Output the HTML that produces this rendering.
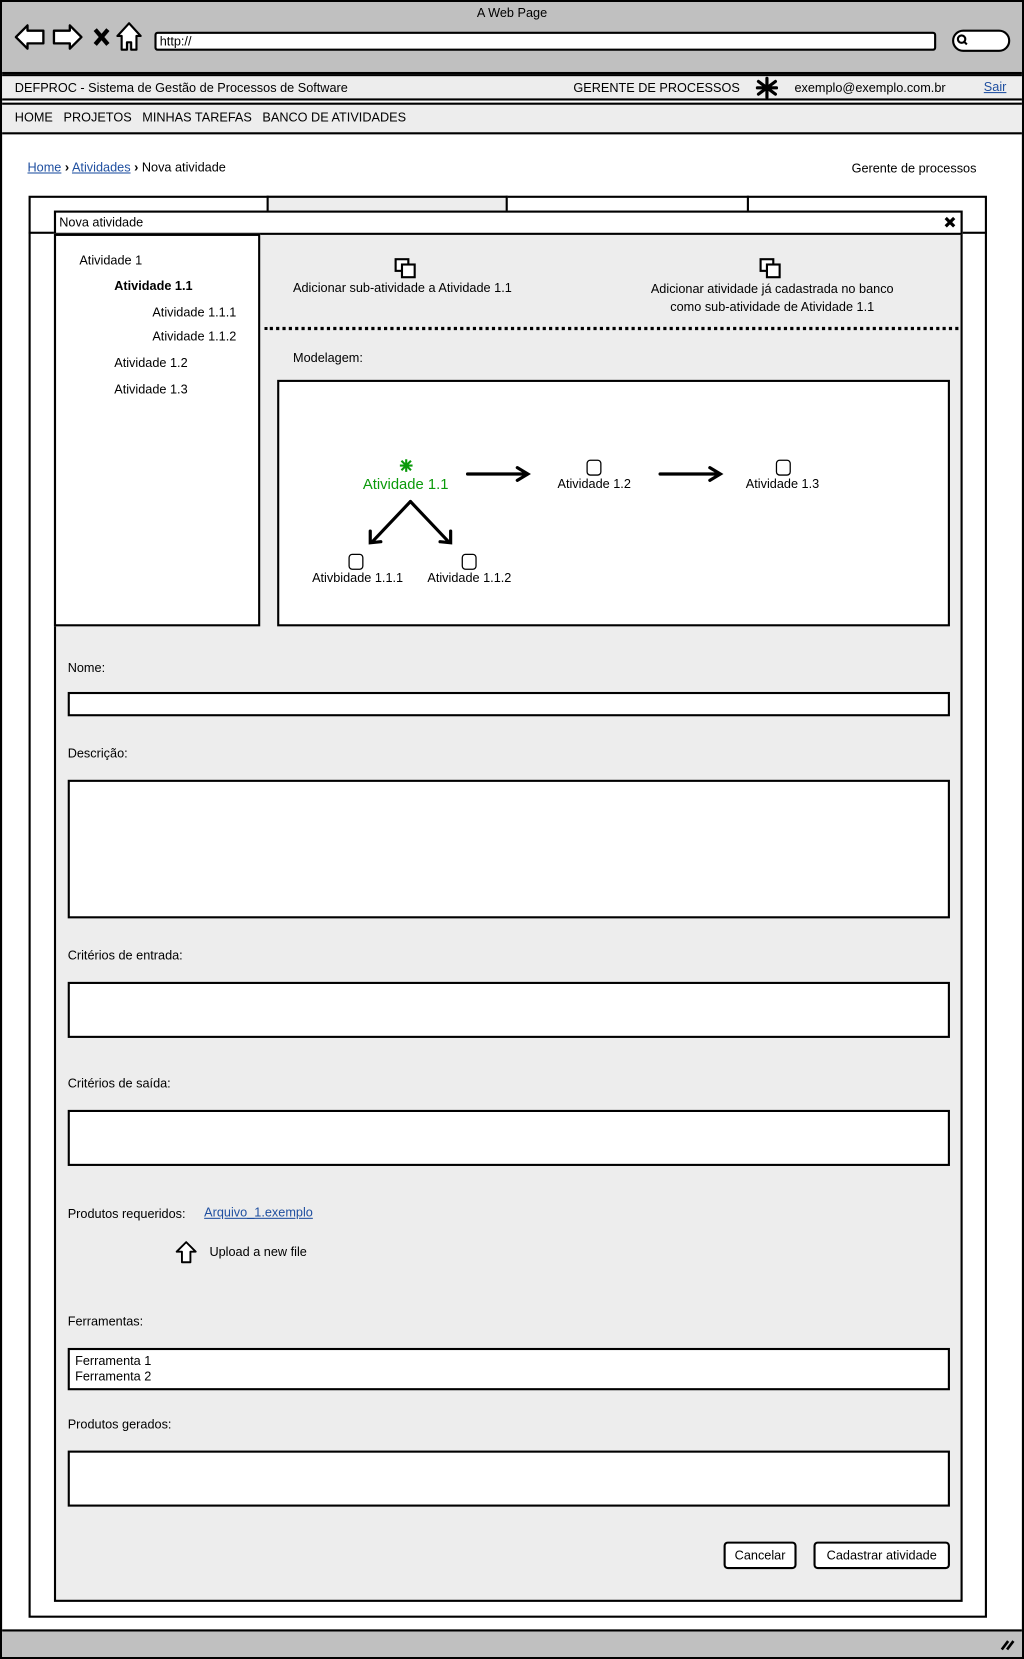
<!DOCTYPE html>
<html><head><meta charset="utf-8"><style>
html,body{margin:0;padding:0;width:1024px;height:1659px;overflow:hidden;background:#fff}
#w{position:absolute;left:0;top:0;width:968px;height:1568px;transform:scale(1.05785,1.05804);transform-origin:0 0;font-family:"Liberation Sans",sans-serif;font-size:12px;color:#000}
.a{position:absolute}
.t{position:absolute;white-space:nowrap;line-height:14px}
.box{position:absolute;background:#fff;border:2px solid #000;box-sizing:border-box}
a{color:#1f4fa0;text-decoration:underline}
</style></head><body><div id="w">
<div class="a" style="left:0;top:0;width:968px;height:1568px;border:2px solid #000;box-sizing:border-box"></div>
<div class="a" style="left:2px;top:2px;width:964px;height:66px;background:#c0c0c0;border-bottom:2px solid #000"></div>
<div class="t" style="left:0;width:968px;text-align:center;top:5px;font-size:12px">A Web Page</div>
<svg class="a" style="left:12px;top:19px" width="130" height="32" viewBox="0 0 130 32">
<path d="M3 16 L14 5 L14 10 L29 10 L29 22 L14 22 L14 27 Z" fill="#fff" stroke="#000" stroke-width="2.2" stroke-linejoin="round"/>
<path d="M65 16 L54 5 L54 10 L39 10 L39 22 L54 22 L54 27 Z" fill="#fff" stroke="#000" stroke-width="2.2" stroke-linejoin="round"/>
<path d="M78 9 L90 23 M90 9 L78 23" stroke="#000" stroke-width="4"/>
<path d="M110 3 L99 15 L103 15 L103 28 L108 28 L108 21 L112 21 L112 28 L117 28 L117 15 L121 15 Z" fill="#fff" stroke="#000" stroke-width="2" stroke-linejoin="round"/>
</svg>
<div class="a" style="left:146px;top:30px;width:739px;height:18px;background:#fff;border:2px solid #000;box-sizing:border-box;border-radius:3px"></div>
<div class="t" style="left:151px;top:32px">http://</div>
<div class="a" style="left:900px;top:28px;width:55px;height:21px;background:#fff;border:2px solid #000;box-sizing:border-box;border-radius:11px"></div>
<svg class="a" style="left:903px;top:31px" width="14" height="14"><circle cx="6" cy="6" r="3.5" fill="none" stroke="#000" stroke-width="2"/><path d="M8 8 L11 11" stroke="#000" stroke-width="2"/></svg>
<div class="a" style="left:2px;top:70px;width:964px;height:25px;background:#ededed;border-top:2px solid #000;border-bottom:2px solid #000;box-sizing:border-box"></div>
<div class="t" style="left:14px;top:76px">DEFPROC - Sistema de Gestão de Processos de Software</div>
<div class="t" style="left:542px;top:76px">GERENTE DE PROCESSOS</div>
<svg class="a" style="left:714px;top:72px" width="22" height="22"><g stroke="#000" stroke-width="3" stroke-linecap="round"><path d="M11 2 L11 20 M3 5 L19 17 M19 5 L3 17 M2 11 L20 11"/></g></svg>
<div class="t" style="left:751px;top:76px">exemplo@exemplo.com.br</div>
<div class="t" style="left:930px;top:75px"><a>Sair</a></div>
<div class="a" style="left:2px;top:97px;width:964px;height:30px;background:#ededed;border-top:2px solid #000;border-bottom:2px solid #000;box-sizing:border-box"></div>
<div class="t" style="left:14px;top:104px">HOME&nbsp;&nbsp;&nbsp;PROJETOS&nbsp;&nbsp;&nbsp;MINHAS TAREFAS&nbsp;&nbsp;&nbsp;BANCO DE ATIVIDADES</div>
<div class="t" style="left:26px;top:151px"><a>Home</a> <b>›</b> <a>Atividades</a> <b>›</b> Nova atividade</div>
<div class="t" style="left:805px;top:152px">Gerente de processos</div>
<div class="a" style="left:27px;top:185px;width:906px;height:1344px;border:2px solid #000;box-sizing:border-box"></div>
<div class="a" style="left:252px;top:185px;width:228px;height:15px;background:#ededed;border-left:2px solid #000;border-right:2px solid #000;border-top:2px solid #000;box-sizing:border-box"></div>
<div class="a" style="left:706px;top:185px;width:2px;height:15px;background:#000"></div>
<div class="a" style="left:27px;top:219px;width:906px;height:2px;background:#000"></div>
<div class="a" style="left:51px;top:199px;width:859px;height:1315px;background:#ededed;border:2px solid #000;box-sizing:border-box"></div>
<div class="a" style="left:51px;top:199px;width:859px;height:23px;background:#fff;border:2px solid #000;box-sizing:border-box"></div>
<div class="t" style="left:56px;top:203px">Nova atividade</div>
<svg class="a" style="left:892px;top:204px" width="12" height="12"><path d="M2 2 L10 10 M10 2 L2 10" stroke="#000" stroke-width="3"/></svg>
<div class="box" style="left:51px;top:221px;width:195px;height:371px"></div>
<div class="t" style="left:75px;top:239px">Atividade 1</div>
<div class="t" style="left:108px;top:263px;font-weight:bold">Atividade 1.1</div>
<div class="t" style="left:144px;top:288px">Atividade 1.1.1</div>
<div class="t" style="left:144px;top:311px">Atividade 1.1.2</div>
<div class="t" style="left:108px;top:336px">Atividade 1.2</div>
<div class="t" style="left:108px;top:361px">Atividade 1.3</div>
<svg class="a" style="left:372px;top:243px" width="24" height="22"><rect x="2" y="2" width="12" height="11" fill="#fff" stroke="#000" stroke-width="2"/><rect x="8" y="7" width="12" height="12" fill="#fff" stroke="#000" stroke-width="2"/></svg>
<svg class="a" style="left:717px;top:243px" width="24" height="22"><rect x="2" y="2" width="12" height="11" fill="#fff" stroke="#000" stroke-width="2"/><rect x="8" y="7" width="12" height="12" fill="#fff" stroke="#000" stroke-width="2"/></svg>
<div class="t" style="left:277px;top:265px">Adicionar sub-atividade a Atividade 1.1</div>
<div class="t" style="left:560px;width:340px;text-align:center;top:265px;line-height:17px">Adicionar atividade já cadastrada no banco<br>como sub-atividade de Atividade 1.1</div>
<div class="a" style="left:250px;top:309px;width:656px;height:0;border-top:3px dotted #000"></div>
<div class="t" style="left:277px;top:331px">Modelagem:</div>
<div class="box" style="left:262px;top:359px;width:636px;height:233px"></div>
<svg class="a" style="left:377px;top:433px" width="14" height="14"><g stroke="#0a9a0a" stroke-width="2"><path d="M7 1 L7 13 M1 7 L13 7 M2.5 2.5 L11.5 11.5 M11.5 2.5 L2.5 11.5"/></g></svg>
<div class="t" style="left:343px;top:449px;color:#0a9a0a;font-size:14px;line-height:16px">Atividade 1.1</div>
<svg class="a" style="left:262px;top:359px" width="636" height="233">
<g stroke="#000" stroke-width="3" fill="none" stroke-linecap="round">
<path d="M180 89 L236 89 M227 83 L237 89 L227 95"/>
<path d="M362 89 L418 89 M409 83 L419 89 L409 95"/>
<path d="M126 115 L90 153 M88 143 L88 154 L98 153"/>
<path d="M126 115 L162 153 M164 143 L164 154 L154 153"/>
</g>
<g fill="#fff" stroke="#000" stroke-width="1.2">
<rect x="293" y="76" width="13" height="14" rx="3"/>
<rect x="472" y="76" width="13" height="14" rx="3"/>
<rect x="68" y="165" width="13" height="14" rx="3"/>
<rect x="175" y="165" width="13" height="14" rx="3"/>
</g></svg>
<div class="t" style="left:527px;top:450px">Atividade 1.2</div>
<div class="t" style="left:705px;top:450px">Atividade 1.3</div>
<div class="t" style="left:295px;top:539px">Ativbidade 1.1.1</div>
<div class="t" style="left:404px;top:539px">Atividade 1.1.2</div>
<div class="t" style="left:64px;top:624px">Nome:</div>
<div class="box" style="left:64px;top:654px;width:834px;height:23px"></div>
<div class="t" style="left:64px;top:705px">Descrição:</div>
<div class="box" style="left:64px;top:737px;width:834px;height:131px"></div>
<div class="t" style="left:64px;top:896px">Critérios de entrada:</div>
<div class="box" style="left:64px;top:928px;width:834px;height:53px"></div>
<div class="t" style="left:64px;top:1017px">Critérios de saída:</div>
<div class="box" style="left:64px;top:1049px;width:834px;height:53px"></div>
<div class="t" style="left:64px;top:1140px">Produtos requeridos:</div>
<div class="t" style="left:193px;top:1139px"><a>Arquivo_1.exemplo</a></div>
<svg class="a" style="left:165px;top:1172px" width="24" height="24"><path d="M11 2 L2 11 L7 11 L7 21 L15 21 L15 11 L20 11 Z" fill="#fff" stroke="#000" stroke-width="1.8" stroke-linejoin="round"/></svg>
<div class="t" style="left:198px;top:1176px">Upload a new file</div>
<div class="t" style="left:64px;top:1242px">Ferramentas:</div>
<div class="box" style="left:64px;top:1274px;width:834px;height:40px"></div>
<div class="t" style="left:71px;top:1279px;line-height:15px">Ferramenta 1<br>Ferramenta 2</div>
<div class="t" style="left:64px;top:1339px">Produtos gerados:</div>
<div class="box" style="left:64px;top:1371px;width:834px;height:53px"></div>
<div class="box" style="left:684px;top:1457px;width:69px;height:26px;border-radius:4px;text-align:center;line-height:22px">Cancelar</div>
<div class="box" style="left:769px;top:1457px;width:129px;height:26px;border-radius:4px;text-align:center;line-height:22px">Cadastrar atividade</div>
<div class="a" style="left:2px;top:1540px;width:964px;height:26px;background:#c0c0c0;border-top:2px solid #000;box-sizing:border-box"></div>
<svg class="a" style="left:944px;top:1546px" width="18" height="16"><path d="M3 13 L9 5 M8 13 L14 5" stroke="#000" stroke-width="2.5"/></svg>
</div></body></html>
